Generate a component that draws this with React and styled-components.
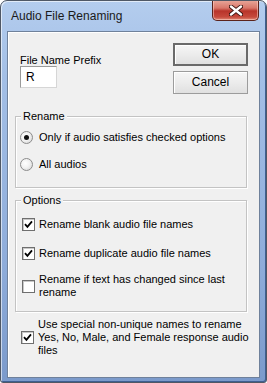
import React from 'react';
import styled, { createGlobalStyle } from 'styled-components';

const GlobalStyle = createGlobalStyle`
  html, body {
    margin: 0;
    padding: 0;
    background: #ffffff;
  }
  body {
    font-family: 'Liberation Sans', Arial, sans-serif;
  }
`;

const StyledWindow = styled.div`
  width: 267px;
  height: 383px;
  box-sizing: border-box;
  border: 1px solid #4f5866;
  border-radius: 7px 7px 3px 3px;
  background: linear-gradient(180deg, #b4cdee 0%, #a3bfe6 20%, #8eacda 70%, #7b9acb 100%);
  display: flex;
  flex-direction: column;
  overflow: hidden;
  box-shadow: inset 1px 1px 0 rgba(255, 255, 255, 0.6), inset -1px -1px 0 #3f5f92;
`;

const StyledTitleBar = styled.div`
  height: 30px;
  display: flex;
  align-items: flex-start;
  justify-content: space-between;
  padding: 0 7px 0 10px;
`;

const StyledTitle = styled.div`
  margin-top: 8px;
  font-family: 'Liberation Sans', Arial, sans-serif;
  font-size: 12px;
  line-height: 15px;
  color: #1a1a1a;
`;

const StyledClose = styled.div`
  width: 47px;
  height: 21px;
  margin-top: -1px;
  box-sizing: border-box;
  border: 1px solid #5b231b;
  border-top: none;
  border-radius: 0 0 5px 5px;
  background: linear-gradient(180deg, #e9a99c 0%, #d9776a 40%, #b8342a 55%, #c64a3c 85%, #e08a77 100%);
  box-shadow: inset 0 0 0 1px rgba(255, 220, 210, 0.5);
  display: flex;
  align-items: center;
  justify-content: center;
`;

const StyledClient = styled.div`
  flex: 1;
  margin: 0 6px 4px 6px;
  box-sizing: border-box;
  border: 1px solid #6f819b;
  box-shadow: inset 1px 1px 0 #ffffff;
  background: #f0f0f0;
  display: flex;
  flex-direction: column;
  font-size: 11px;
  line-height: 13px;
  color: #000000;
`;

const StyledTop = styled.div`
  display: flex;
  justify-content: space-between;
  align-items: flex-start;
  padding: 0 11px 0 12px;
`;

const StyledPrefix = styled.div`
  display: flex;
  flex-direction: column;
  padding-top: 22px;
`;

const StyledLabel = styled.div`
  line-height: 12px;
`;

const StyledInput = styled.div`
  width: 37px;
  height: 22px;
  box-sizing: border-box;
  border: 1px solid #9a9a9a;
  border-right-color: #d6d6d6;
  border-bottom-color: #d6d6d6;
  background: #ffffff;
  padding: 4px 0 0 5px;
  font-size: 12px;
`;

const StyledButtons = styled.div`
  display: flex;
  flex-direction: column;
  gap: 5px;
  padding-top: 11px;
`;

const StyledButton = styled.div`
  width: 75px;
  height: 23px;
  box-sizing: border-box;
  border: ${({ primary }) => (primary ? '2px solid #6a6a6a' : '1px solid #9c9c9c')};
  background: linear-gradient(180deg, #f6f6f6 0%, #ececec 50%, #e0e0e0 100%);
  box-shadow: inset 1px 1px 0 #ffffff;
  display: flex;
  align-items: center;
  justify-content: center;
  font-size: 12px;
`;

const StyledGroup = styled.div`
  position: relative;
  margin: ${({ top }) => top}px 12px 0 7px;
  border: 1px solid #c3c3c3;
  box-shadow: 1px 1px 0 #ffffff, inset 1px 1px 0 #ffffff;
  padding: ${({ pad }) => pad};
  display: flex;
  flex-direction: column;
`;

const StyledLegend = styled.span`
  position: absolute;
  top: -7px;
  left: 5px;
  padding: 0 2px;
  background: #f0f0f0;
  line-height: 13px;
`;

const StyledRow = styled.div`
  display: flex;
  align-items: center;
  min-height: ${({ h }) => h || 13}px;
  margin-top: ${({ top }) => top || 0}px;
  padding-left: ${({ left }) => left || 0}px;
`;

const StyledText = styled.div`
  margin-left: ${({ gap }) => gap}px;
  line-height: 13px;
`;

const StyledRadio = styled.span`
  width: 13px;
  height: 13px;
  flex-shrink: 0;
  box-sizing: border-box;
  border-radius: 50%;
  border: 1px solid #8c8c8c;
  background: radial-gradient(circle at 40% 40%, #ffffff 0%, #f2f2f2 45%, #cfcfcf 100%);
  display: flex;
  align-items: center;
  justify-content: center;
  &::after {
    content: '';
    width: 5px;
    height: 5px;
    border-radius: 50%;
    background: ${({ checked }) => (checked ? '#111111' : 'transparent')};
  }
`;

const StyledBox = styled.span`
  width: 13px;
  height: 13px;
  flex-shrink: 0;
  box-sizing: border-box;
  border: 1px solid #6f6f6f;
  background: #ffffff;
  box-shadow: inset 1px 1px 0 #c8c8c8;
  display: flex;
  align-items: center;
  justify-content: center;
`;

const CloseGlyph = () => (
  <svg width="14" height="11" viewBox="0 0 14 11">
    <path
      d="M2 1.5 L12 9.5 M12 1.5 L2 9.5"
      stroke="#3b1410"
      strokeWidth="4.2"
      strokeLinecap="round"
    />
    <path
      d="M2 1.5 L12 9.5 M12 1.5 L2 9.5"
      stroke="#ffffff"
      strokeWidth="2.4"
      strokeLinecap="round"
    />
  </svg>
);

const Check = ({ checked }) => (
  <StyledBox>
    {checked && (
      <svg width="9" height="9" viewBox="0 0 9 9">
        <path d="M1 4.2 L3.4 6.8 L8 1.4" fill="none" stroke="#000000" strokeWidth="1.8" />
      </svg>
    )}
  </StyledBox>
);

const App = () => (
  <>
    <GlobalStyle />
    <StyledWindow>
      <StyledTitleBar>
        <StyledTitle>Audio File Renaming</StyledTitle>
        <StyledClose>
          <CloseGlyph />
        </StyledClose>
      </StyledTitleBar>
      <StyledClient>
        <StyledTop>
          <StyledPrefix>
            <StyledLabel>File Name Prefix</StyledLabel>
            <StyledInput>R</StyledInput>
          </StyledPrefix>
          <StyledButtons>
            <StyledButton primary>OK</StyledButton>
            <StyledButton>Cancel</StyledButton>
          </StyledButtons>
        </StyledTop>

        <StyledGroup top={22} pad="7px 0 9px 4px">
          <StyledLegend>Rename</StyledLegend>
          <StyledRow h={27}>
            <StyledRadio checked />
            <StyledText gap={6}>Only if audio satisfies checked options</StyledText>
          </StyledRow>
          <StyledRow h={27}>
            <StyledRadio />
            <StyledText gap={6}>All audios</StyledText>
          </StyledRow>
        </StyledGroup>

        <StyledGroup top={12} pad="0 0 12px 6px">
          <StyledLegend>Options</StyledLegend>
          <StyledRow top={17}>
            <Check checked />
            <StyledText gap={4}>Rename blank audio file names</StyledText>
          </StyledRow>
          <StyledRow top={16}>
            <Check checked />
            <StyledText gap={4}>Rename duplicate audio file names</StyledText>
          </StyledRow>
          <StyledRow top={13}>
            <Check />
            <StyledText gap={4}>Rename if text has changed since last rename</StyledText>
          </StyledRow>
        </StyledGroup>

        <StyledRow top={6} left={13}>
          <Check checked />
          <StyledText gap={4}>
            Use special non-unique names to rename Yes, No, Male, and Female response audio files
          </StyledText>
        </StyledRow>
      </StyledClient>
    </StyledWindow>
  </>
);

export default App;
